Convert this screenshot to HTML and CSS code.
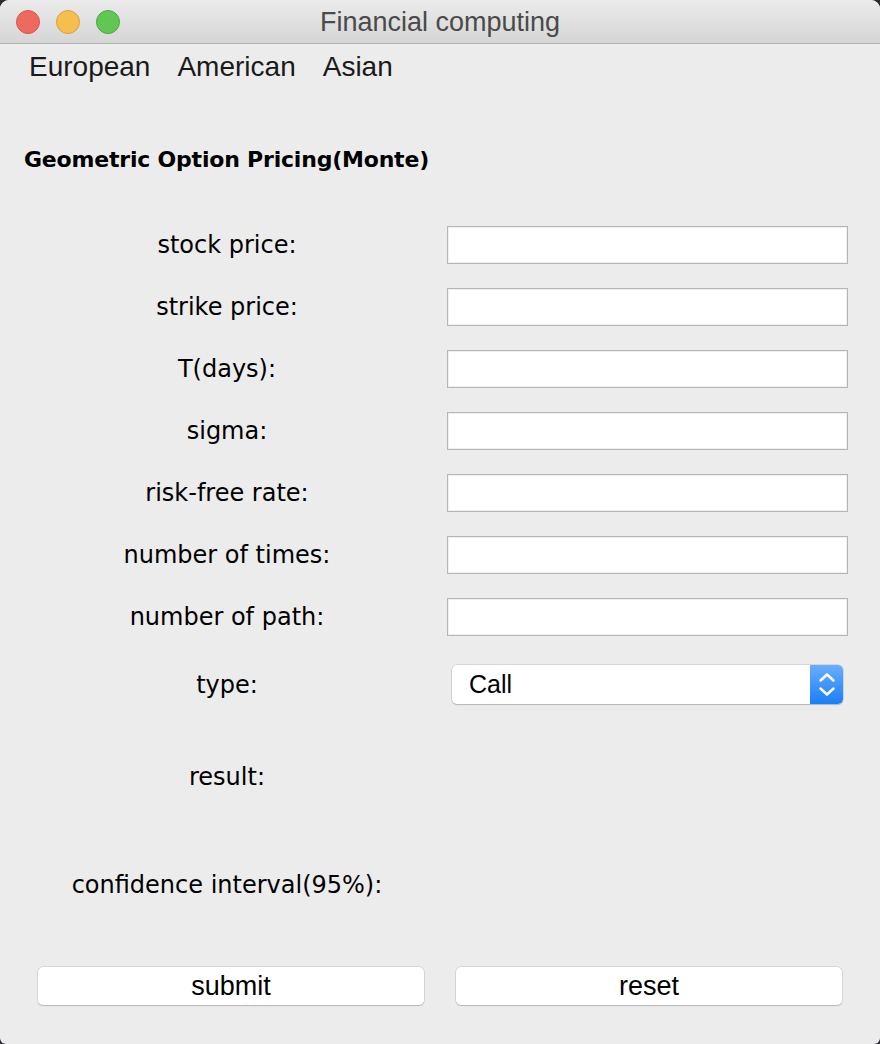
FILE: index.html
```html
<!DOCTYPE html>
<html>
<head>
<meta charset="utf-8">
<link rel="stylesheet" href="styles.css">
</head>
<body>
<div class="window">
  <div class="titlebar">
    <div class="lights">
      <span class="light red"></span>
      <span class="light yellow"></span>
      <span class="light green"></span>
    </div>
    <div class="title">Financial computing</div>
  </div>
  <div class="menubar">
    <span class="menu">European</span>
    <span class="menu">American</span>
    <span class="menu">Asian</span>
  </div>
  <h1 class="heading">Geometric Option Pricing(Monte)</h1>
  <div class="form">
    <div class="label">stock price:</div><div class="field"><div class="input"></div></div>
    <div class="label">strike price:</div><div class="field"><div class="input"></div></div>
    <div class="label">T(days):</div><div class="field"><div class="input"></div></div>
    <div class="label">sigma:</div><div class="field"><div class="input"></div></div>
    <div class="label">risk-free rate:</div><div class="field"><div class="input"></div></div>
    <div class="label">number of times:</div><div class="field"><div class="input"></div></div>
    <div class="label">number of path:</div><div class="field"><div class="input"></div></div>
  </div>
  <div class="type-row">
    <div class="label">type:</div>
    <div class="select">
      <span class="select-text">Call</span>
      <span class="select-arrows">
        <svg width="18" height="26" viewBox="0 0 18 26"><path d="M2.5 8.5 L9 2.5 L15.5 8.5 M2.5 16.5 L9 22.5 L15.5 16.5" fill="none" stroke="#fff" stroke-width="2.4" stroke-linecap="round" stroke-linejoin="round"/></svg>
      </span>
    </div>
  </div>
  <div class="out-row result"><div class="label">result:</div></div>
  <div class="out-row conf"><div class="label">confidence interval(95%):</div></div>
  <div class="buttons">
    <button class="btn">submit</button>
    <button class="btn">reset</button>
  </div>
</div>
</body>
</html>
```
FILE: styles.css
```css
html, body {
  margin: 0;
  padding: 0;
  background: #2b2d33;
}
.window {
  width: 880px;
  height: 1044px;
  background: #ececec;
  border-radius: 9px 9px 6px 6px;
  overflow: hidden;
  font-family: "DejaVu Sans", sans-serif;
  color: #000;
}
.titlebar {
  height: 43px;
  border-bottom: 1px solid #b2b2b2;
  background: linear-gradient(#ebebeb, #d5d5d5);
  display: flex;
  align-items: center;
  position: relative;
}
.lights {
  display: flex;
  gap: 16px;
  padding-left: 16px;
}
.light {
  width: 24px;
  height: 24px;
  border-radius: 50%;
  box-sizing: border-box;
}
.red { background: #ee6a5f; border: 1px solid #d8574d; }
.yellow { background: #f5be4f; border: 1px solid #d9a23c; }
.green { background: #62c655; border: 1px solid #4ca83f; }
.title {
  position: absolute;
  left: 0;
  right: 0;
  text-align: center;
  font-family: "Liberation Sans", sans-serif;
  font-size: 27px;
  color: #4a4a4a;
  top: 7px;
}
.menubar {
  display: flex;
  gap: 27px;
  padding: 7px 0 0 29px;
  height: 40px;
  font-family: "Liberation Sans", sans-serif;
  font-size: 28px;
  color: #1a1a1a;
}
.heading {
  margin: 0;
  padding: 56px 0 0 24px;
  height: 49px;
  font-size: 22px;
  font-weight: bold;
  letter-spacing: -0.2px;
}
.form {
  display: grid;
  grid-template-columns: 447px 401px;
  grid-auto-rows: 38px;
  row-gap: 24px;
  margin-top: 30px;
}
.label {
  padding-left: 7px;
  text-align: center;
  font-size: 24px;
  line-height: 38px;
}
.form .label { width: 440px; }
.input {
  height: 38px;
  box-sizing: border-box;
  background: #fff;
  border: 1px solid #b5b5b5;
  box-shadow: inset 0 0 0 1px #f0f0f0;
}
.type-row {
  display: grid;
  grid-template-columns: 452px 391px;
  margin-top: 29px;
  height: 40px;
}
.type-row .label {
  width: 440px;
  line-height: 40px;
}
.select {
  height: 39px;
  box-sizing: border-box;
  background: #fff;
  border-radius: 5px;
  box-shadow: 0 0 0 0.5px #bdbdbd, 0 1px 1px rgba(0,0,0,0.25);
  display: flex;
  align-items: center;
  overflow: hidden;
}
.select-text {
  flex: 1;
  padding-left: 17px;
  font-family: "Liberation Sans", sans-serif;
  font-size: 25px;
}
.select-arrows {
  width: 33px;
  height: 100%;
  background: linear-gradient(#6aaefb, #1a7ef9);
  display: flex;
  align-items: center;
  justify-content: center;
}
.out-row .label {
  width: 440px;
}
.result { margin-top: 53px; }
.conf { margin-top: 70px; }
.buttons {
  display: grid;
  grid-template-columns: 386px 386px;
  column-gap: 32px;
  padding-left: 38px;
  margin-top: 63px;
}
.btn {
  height: 38px;
  background: #fff;
  border: none;
  border-radius: 5px;
  box-shadow: 0 0 0 0.5px #c2c2c2, 0 1px 1px rgba(0,0,0,0.25);
  font-family: "Liberation Sans", sans-serif;
  font-size: 27px;
  color: #000;
  padding: 0;
}
```
